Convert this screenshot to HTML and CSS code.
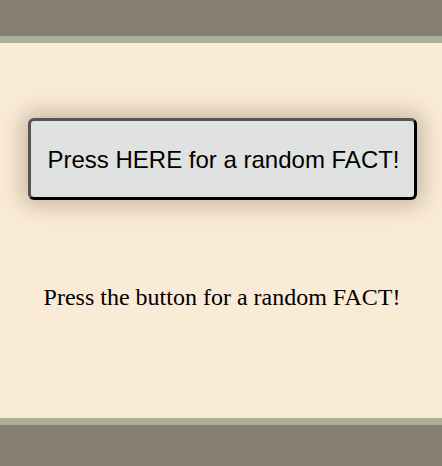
FILE: index.html
```html
<!DOCTYPE html>
<html>
<head>
<meta charset="utf-8">
<link rel="stylesheet" href="styles.css">
</head>
<body>
<header class="top"></header>
<main class="content">
  <button class="fact-btn">Press HERE for a random FACT!</button>
  <p class="fact">Press the button for a random FACT!</p>
</main>
<footer class="bottom"></footer>
</body>
</html>
```
FILE: styles.css
```css
html, body {
  margin: 0;
  padding: 0;
  height: 100%;
}
body {
  display: flex;
  flex-direction: column;
  background: #faebd7;
}
.top {
  height: 36px;
  background: #857f72;
  border-bottom: 7px solid #adb094;
  flex: none;
}
.bottom {
  height: 41px;
  background: #857f72;
  border-top: 7px solid #adb094;
  flex: none;
}
.content {
  flex: 1;
  display: flex;
  flex-direction: column;
  align-items: center;
  padding-top: 75px;
}
.fact-btn {
  width: 389px;
  height: 82px;
  margin-left: 3px;
  background: #e0e1e1;
  border: 3px solid;
  border-color: #555555 #000000 #000000 #555555;
  border-radius: 6px;
  box-shadow: 0 0 22px 6px rgba(110, 90, 60, 0.35);
  font-family: "Liberation Sans", Arial, sans-serif;
  font-size: 24px;
  color: #000;
  padding: 2px 0 0 2px;
}
.fact {
  margin: 83px 0 0 2px;
  font-family: "Liberation Serif", "Times New Roman", serif;
  font-size: 24px;
  color: #000;
  line-height: 28px;
}
```
